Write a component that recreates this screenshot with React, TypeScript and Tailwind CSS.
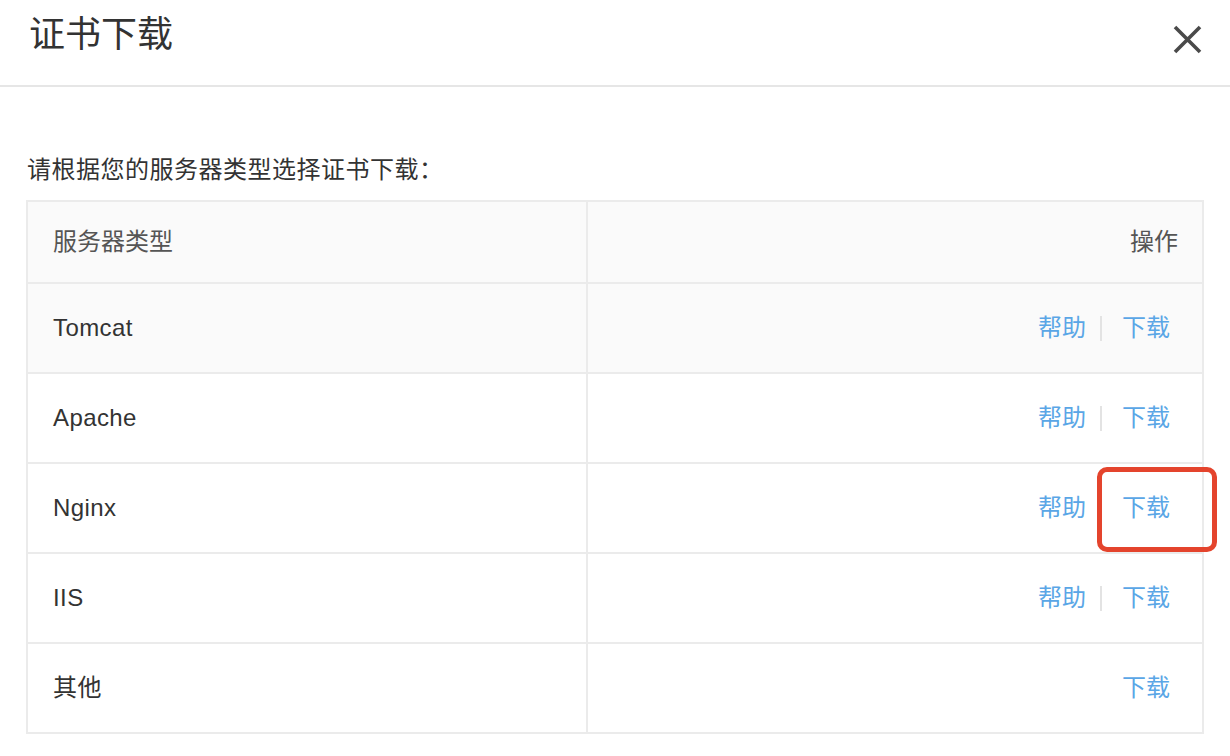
import React from "react";

const rows = [
  { name: "Tomcat", help: true, bg: "bg-[#fafafa]" },
  { name: "Apache", help: true, bg: "bg-white" },
  { name: "Nginx", help: true, bg: "bg-white", mark: true },
  { name: "IIS", help: true, bg: "bg-white" },
  { name: "其他", help: false, bg: "bg-white" },
];

export default function App() {
  return (
    <div
      className="w-[1230px] h-[756px] bg-white overflow-hidden text-[#333333]"
      style={{ fontFamily: '"Liberation Sans", "Noto Sans CJK SC", sans-serif' }}
    >
      <div className="h-[87px] border-b-2 border-[#e6e6e6] flex items-start justify-between pl-[29px] pr-[28px]">
        <div className="pt-[17px] text-[36px] leading-[36px] text-[#333333]">证书下载</div>
        <svg width="29" height="29" viewBox="0 0 29 29" className="mt-[25px]">
          <path d="M2 2 L27 27 M27 2 L2 27" stroke="#4a4a4a" strokeWidth="3.6" fill="none" />
        </svg>
      </div>

      <div className="mt-[71px] pl-[27px] text-[24px] leading-[24px] tracking-[0.5px] text-[#333333]">
        请根据您的服务器类型选择证书下载：
      </div>

      <div className="mt-[18px] ml-[26px] w-[1178px] border-2 border-b-0 border-[#ebebeb]">
        <div className="flex h-[82px] border-b-2 border-[#ebebeb] bg-[#fafafa]">
          <div className="w-[560px] shrink-0 border-r-2 border-[#ebebeb] flex items-center pl-[25px] text-[24px] text-[#555555]">
            服务器类型
          </div>
          <div className="flex-1 flex items-center justify-end pr-[24px] text-[24px] text-[#555555]">
            操作
          </div>
        </div>
        {rows.map((r) => (
          <div key={r.name} className={`flex h-[90px] border-b-2 border-[#ebebeb] ${r.bg}`}>
            <div className="w-[560px] shrink-0 border-r-2 border-[#ebebeb] flex items-center pl-[25px] text-[24px] tracking-[0.4px] text-[#333333]">
              {r.name}
            </div>
            <div className="relative flex-1 flex items-center justify-end pr-[32px] text-[24px] text-[#5aa6e6]">
              {r.help && (
                <>
                  <span className="leading-[24px]">帮助</span>
                  <span className="ml-[14px] mr-[20px] w-[2px] h-[25px] bg-[#e3e3e3]" />
                </>
              )}
              <span className="leading-[24px]">下载</span>
              {r.mark && (
                <div className="absolute left-[509px] top-[3px] w-[120px] h-[85px] border-[5px] border-[#e4442d] rounded-[10px]" />
              )}
            </div>
          </div>
        ))}
      </div>
    </div>
  );
}
